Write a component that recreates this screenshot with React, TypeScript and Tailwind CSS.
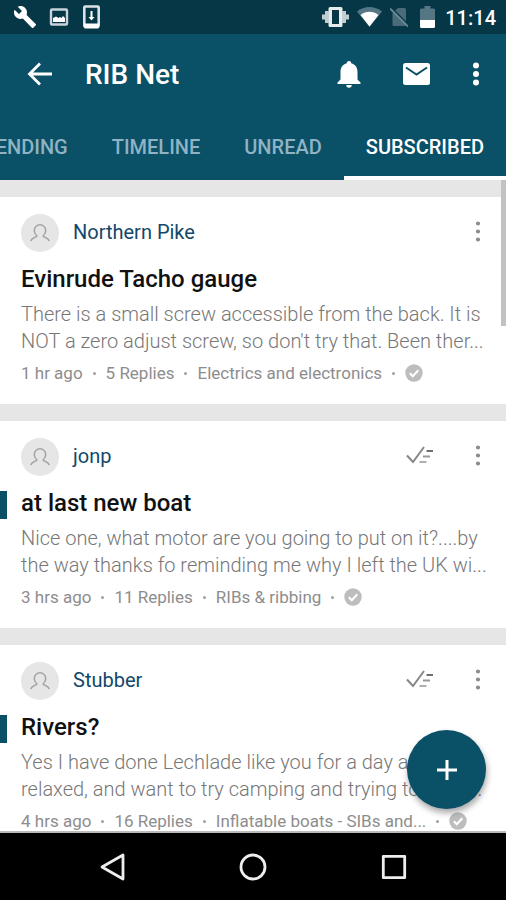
import clsx from "clsx";

type Topic = {
  id: number;
  author: string;
  title: string;
  preview: string;
  time: string;
  replies: string;
  forum: string;
  unread: boolean;
};

const TABS = ["TRENDING", "TIMELINE", "UNREAD", "SUBSCRIBED"];

const TOPICS: Topic[] = [
  {
    id: 1,
    author: "Northern Pike",
    title: "Evinrude Tacho gauge",
    preview:
      "There is a small screw accessible from the back. It is NOT a zero adjust screw, so don't try that. Been ther...",
    time: "1 hr ago",
    replies: "5 Replies",
    forum: "Electrics and electronics",
    unread: false,
  },
  {
    id: 2,
    author: "jonp",
    title: "at last new boat",
    preview:
      "Nice one, what motor are you going to put on it?....by the way thanks fo reminding me why I left the UK wi...",
    time: "3 hrs ago",
    replies: "11 Replies",
    forum: "RIBs & ribbing",
    unread: true,
  },
  {
    id: 3,
    author: "Stubber",
    title: "Rivers?",
    preview:
      "Yes I have done Lechlade like you for a day and relaxed, and want to try camping and trying to get a...",
    time: "4 hrs ago",
    replies: "16 Replies",
    forum: "Inflatable boats - SIBs and...",
    unread: true,
  },
];

function StatusBar() {
  return (
    <div className="flex h-[34px] shrink-0 items-center bg-[#063746] pl-[13px] pr-[10px] text-white">
      <svg className="size-6" viewBox="0 0 24 24" fill="currentColor">
        <path d="M22.7 19l-9.1-9.1c.9-2.3.4-5-1.5-6.9-2-2-5-2.4-7.4-1.3L9 6 6 9 1.6 4.7C.4 7.1.9 10.1 2.9 12.1c1.9 1.9 4.6 2.4 6.9 1.5l9.1 9.1c.4.4 1 .4 1.4 0l2.3-2.3c.5-.4.5-1.1.1-1.4z" />
      </svg>
      <svg className="ml-3 h-[18px] w-5" viewBox="0 0 20 18">
        <rect x="2" y="1.5" width="16" height="15" rx="1" fill="none" stroke="#c9d3d9" strokeWidth="2.4" />
        <path d="M4 14v-4l3-1.500 2.500 1.500 1.500-1 1.500 1 1.500-2 2 2V14z" fill="#fff" />
      </svg>
      <svg className="ml-[14px] h-6 w-[17px]" viewBox="0 0 17 24">
        <rect x="1.300" y="1.500" width="14.400" height="20" rx="1" fill="none" stroke="#dbe2e8" strokeWidth="2.600" />
        <path d="M1 18.500h15V22a1.500 1.500 0 0 1-1.500 1.500h-12A1.500 1.500 0 0 1 1 22z" fill="#fff" />
        <path d="M7.500 6h2v6h2l-3 3.500-3-3.500h2z" fill="#fff" />
      </svg>

      <svg className="ml-auto h-[22px] w-[27px]" viewBox="0 0 27 22">
        <path d="M8 1h11a1.500 1.500 0 0 1 1.500 1.500v17A1.500 1.500 0 0 1 19 21H8a1.500 1.500 0 0 1-1.500-1.500v-17A1.500 1.500 0 0 1 8 1zM10 4v14h7V4z" fillRule="evenodd" fill="#e6ebee" />
        <path d="M3 5h4v12H3zM0 8.500h3.500v5H0zM20 5h4v12h-4zM23.500 8.500H27v5h-3.500z" fill="#c3ced3" />
      </svg>
      <svg className="ml-2 h-5 w-[25px]" viewBox="0 0 25 20">
        <path d="M0 4.500C7-1.500 18-1.500 25 4.500L12.500 20z" fill="#557683" />
        <path d="M3.500 8C9 3.800 16 3.800 21.500 8L12.500 19.500z" fill="#fff" />
      </svg>
      <svg className="ml-2 h-5 w-[18px]" viewBox="0 0 18 20">
        <path d="M8 1h6.500A1.500 1.500 0 0 1 16 2.500v15a1.500 1.500 0 0 1-1.500 1.500H4a1.500 1.500 0 0 1-1.500-1.500V6z" fill="#4a6b78" />
        <path d="M1 .5l17 17" stroke="#063746" strokeWidth="1.600" />
        <path d="M0 1.500l18 18" stroke="#6f8994" strokeWidth="1.800" />
      </svg>
      <svg className="ml-3 h-[22px] w-[15px]" viewBox="0 0 15 22">
        <path d="M4.500 0h6v2.500h3A1.500 1.500 0 0 1 15 4v10H0V4a1.500 1.500 0 0 1 1.500-1.500h3z" fill="#557683" />
        <path d="M0 14h15v6.500a1.500 1.500 0 0 1-1.500 1.500h-12A1.500 1.500 0 0 1 0 20.500z" fill="#fff" />
      </svg>
      <span className="ml-[10px] mt-px text-[20px] font-medium leading-6">11:14</span>
    </div>
  );
}

function AppBar() {
  return (
    <header className="shrink-0 bg-[#0a5067] text-white">
      <div className="flex h-20 items-center pl-[26px] pr-[26px]">
        <button type="button" aria-label="Back">
          <svg className="size-7" viewBox="0 0 28 28" fill="none" stroke="currentColor" strokeWidth="2.800">
            <path d="M26 14H4M14 3.500L3.500 14 14 24.500" />
          </svg>
        </button>
        <h1 className="ml-[31px] mt-[2px] text-[28px] font-medium leading-8">RIB Net</h1>

        <button type="button" aria-label="Notifications" className="ml-auto">
          <svg className="h-[27px] w-6" viewBox="0 0 24 27" fill="currentColor">
            <path d="M12 0c1.300 0 2.200.9 2.200 2.300 4 1 6.300 4.300 6.300 8.700v7.500l3 3V23H.5v-1.500l3-3V11c0-4.400 2.300-7.700 6.300-8.700C9.800.9 10.700 0 12 0zM9.300 24h5.400a2.700 2.700 0 0 1-5.400 0z" />
          </svg>
        </button>
        <button type="button" aria-label="Messages" className="ml-[42px]">
          <svg className="h-[22px] w-[27px]" viewBox="0 0 27 22">
            <rect width="27" height="22" rx="2.500" fill="currentColor" />
            <path d="M3 4.500l10.500 7 10.500-7" fill="none" stroke="#0a5067" strokeWidth="2" />
          </svg>
        </button>
        <button type="button" aria-label="More options" className="ml-[42px]">
          <svg className="h-[26px] w-2" viewBox="0 0 8 26" fill="currentColor">
            <circle cx="4" cy="4.500" r="3" />
            <circle cx="4" cy="13" r="3" />
            <circle cx="4" cy="21.500" r="3" />
          </svg>
        </button>
      </div>

      <nav className="flex h-[66px] justify-end overflow-hidden">
        {TABS.map((tab) => (
          <button
            key={tab}
            type="button"
            className={clsx(
              "shrink-0 border-b-4 px-[22px] pt-1 text-[20px] font-medium",
              tab === "SUBSCRIBED"
                ? "border-white text-white"
                : "border-transparent text-[#8fb3c2]"
            )}
          >
            {tab}
          </button>
        ))}
      </nav>
    </header>
  );
}

function Dot() {
  return <span className="mx-[10px] size-[3px] shrink-0 rounded-full bg-[#a0a0a0]" />;
}

function TopicCard({ topic }: { topic: Topic }) {
  return (
    <article className="h-[207px] shrink-0 bg-white pt-[17px]">
      <div className="flex items-center pl-[21px] pr-[25px]">
        <span className="flex size-[38px] items-center justify-center rounded-full bg-[#e6e6e6]">
          <svg className="size-5" viewBox="0 0 20 20" fill="none" stroke="#a3a3a3" strokeWidth="1.500">
            <path d="M.8 18c.8-2.300 3-3.200 5.200-4.200.9-.4 1-1 .4-1.600A5.900 5.900 0 0 1 4.300 7.500a5.700 5.700 0 0 1 11.400 0c0 1.900-.8 3.500-2.100 4.700-.6.600-.5 1.200.4 1.600 2.200 1 4.400 1.900 5.200 4.200" />
          </svg>
        </span>
        <a href="#" className="mb-[2px] ml-[14px] text-[20px] leading-7 text-[#12486a]">
          {topic.author}
        </a>
        {topic.unread && (
          <button type="button" aria-label="Mark as read" className="mb-1 ml-auto">
            <svg className="h-[18px] w-7" viewBox="0 0 28 18" fill="none" stroke="#858585" strokeWidth="2">
              <path d="M1 9.500l6 6.500L18 1" />
              <path d="M20.500 5H27" stroke="#707070" />
              <path d="M17 10.500h7" stroke="#999" />
              <path d="M13.500 16h7" stroke="#adadad" />
            </svg>
          </button>
        )}
        <button
          type="button"
          aria-label="Topic options"
          className={topic.unread ? "ml-[41px]" : "ml-auto"}
        >
          <svg className="h-6 w-[6px]" viewBox="0 0 6 24" fill="#8c8c8c">
            <circle cx="3" cy="2.500" r="2.100" />
            <circle cx="3" cy="10.500" r="2.100" />
            <circle cx="3" cy="18.500" r="2.100" />
          </svg>
        </button>
      </div>

      <div className="mt-[15px] flex h-7">
        <span className={clsx("h-7 w-[7px]", topic.unread && "bg-[#0a5067]")} />
        <h2 className="ml-[14px] text-[24px] font-medium leading-6 text-[#111]">{topic.title}</h2>
      </div>
      <p className="mt-[6px] line-clamp-2 pl-[21px] pr-4 text-[20px] font-light leading-[27px] text-[#777]">
        {topic.preview}
      </p>
      <div className="mt-[6px] flex items-center pl-[21px] text-[17px] leading-6 text-[#8d8d8d]">
        <span>{topic.time}</span>
        <Dot />
        <span>{topic.replies}</span>
        <Dot />
        <span>{topic.forum}</span>
        <Dot />
        <svg className="size-[18px]" viewBox="0 0 18 18">
          <circle cx="9" cy="9" r="8.700" fill="#bdbdbd" />
          <path d="M4.800 9.200l3 3 5.500-6" fill="none" stroke="#fff" strokeWidth="2" />
        </svg>
      </div>
    </article>
  );
}

function NavigationBar() {
  return (
    <footer className="flex h-[69px] shrink-0 items-center justify-center gap-[113px] border-t-2 border-[#bbb] bg-black">
      <button type="button" aria-label="Back">
        <svg className="size-7" viewBox="0 0 28 28" fill="none" stroke="#eee" strokeWidth="2.800" strokeLinejoin="round">
          <path d="M25 2v24L4 14z" />
        </svg>
      </button>
      <button type="button" aria-label="Home">
        <svg className="size-7" viewBox="0 0 28 28" fill="none" stroke="#eee" strokeWidth="2.800">
          <circle cx="14" cy="14" r="12" />
        </svg>
      </button>
      <button type="button" aria-label="Recent apps">
        <svg className="size-7" viewBox="0 0 28 28" fill="none" stroke="#eee" strokeWidth="2.800" strokeLinejoin="round">
          <rect x="3.300" y="3.300" width="21.400" height="21.400" />
        </svg>
      </button>
    </footer>
  );
}

export default function App() {
  return (
    <div className="flex h-screen flex-col overflow-hidden bg-[#e6e6e6] font-['Roboto',sans-serif]">
      <StatusBar />
      <AppBar />
      <main className="relative flex min-h-0 flex-1 flex-col gap-[17px] overflow-hidden pt-[17px]">
        {TOPICS.map((topic) => (
          <TopicCard key={topic.id} topic={topic} />
        ))}
        <span className="absolute right-0 top-0 h-[146px] w-[5px] bg-[#c2c2c2]" />
        <button
          type="button"
          aria-label="New topic"
          className="absolute bottom-[22px] right-5 flex size-[79px] items-center justify-center rounded-full bg-[#0a5067] shadow-[1px_4px_6px_rgba(0,0,0,0.35)]"
        >
          <svg className="size-5" viewBox="0 0 20 20" stroke="#fff" strokeWidth="3">
            <path d="M10 0v20M0 10h20" />
          </svg>
        </button>
      </main>
      <NavigationBar />
    </div>
  );
}
